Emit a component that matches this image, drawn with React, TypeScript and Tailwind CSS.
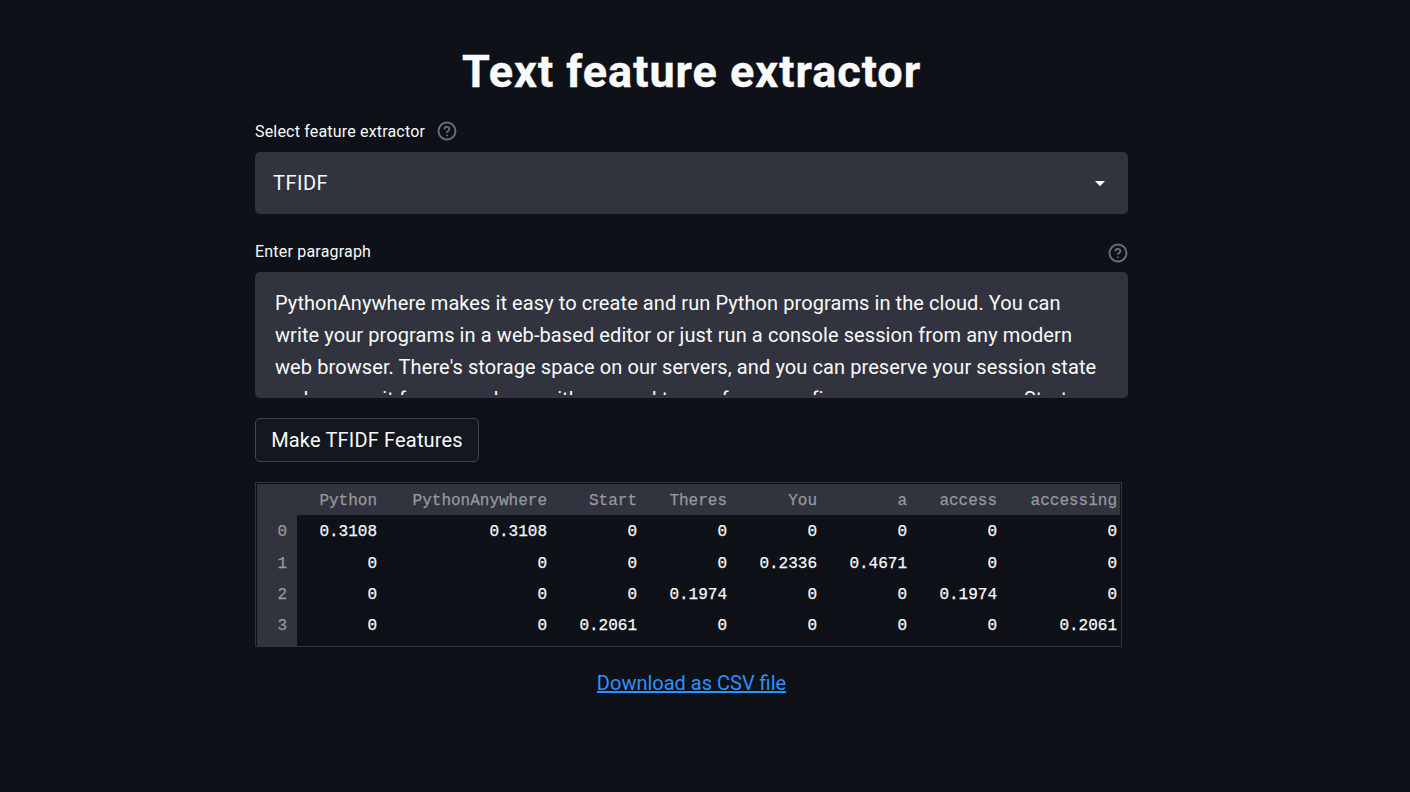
function HelpIcon() {
  return (
    <svg className="block h-5 w-5 shrink-0" viewBox="0 0 20 20" fill="none" stroke="#6b6d75" strokeWidth="1.9" strokeLinecap="round" strokeLinejoin="round">
      <circle cx="10" cy="10" r="8.5" />
      <path d="M7.5 7.5a2.5 2.5 0 0 1 4.86.83c0 1.67-2.4 2.3-2.4 2.7" />
      <path d="M10 14.2h.01" />
    </svg>
  );
}

const columns = [
  { name: "Python", width: "w-[90px]", cells: ["0.3108", "0", "0", "0"] },
  { name: "PythonAnywhere", width: "w-[170px]", cells: ["0.3108", "0", "0", "0"] },
  { name: "Start", width: "w-[90px]", cells: ["0", "0", "0", "0.2061"] },
  { name: "Theres", width: "w-[90px]", cells: ["0", "0", "0.1974", "0"] },
  { name: "You", width: "w-[90px]", cells: ["0", "0.2336", "0", "0"] },
  { name: "a", width: "w-[90px]", cells: ["0", "0.4671", "0", "0"] },
  { name: "access", width: "w-[90px]", cells: ["0", "0", "0.1974", "0"] },
  { name: "accessing", width: "w-[120px]", cells: ["0", "0", "0", "0.2061"] },
];

function FeatureTable() {
  return (
    <div className="mt-5 flex h-[165px] w-[867px] overflow-hidden border border-[#31333f] pt-px pr-px pl-px font-['Liberation_Mono',monospace] text-base leading-[35px] [-webkit-text-stroke:0.25px]">
      <div className="w-10 shrink-0 bg-[#31333f] pt-[31.25px] pr-[10px] text-right text-[#97989b]">
        {[0, 1, 2, 3].map((n) => (
          <div key={n} className="h-[31.25px]">{n}</div>
        ))}
      </div>
      <div className="flex min-w-0 flex-1 overflow-hidden">
        {columns.map((c) => (
          <div key={c.name} className={`${c.width} shrink-0 text-right`}>
            <div className="h-[31.25px] bg-[#31333f] pr-[10px] text-[#97989b]">{c.name}</div>
            {c.cells.map((v, i) => (
              <div key={i} className="h-[31.25px] pr-[10px]">{v}</div>
            ))}
          </div>
        ))}
      </div>
    </div>
  );
}

export default function App() {
  return (
    <div className="h-[792px] w-full overflow-hidden bg-[#0e1117] font-['Roboto',sans-serif] text-xl text-[#fafafa]">
      <main className="ml-[255px] flex w-[873px] flex-col pt-[45px]">
        <h1 className="h-[54px] text-center text-[45px] leading-[54px] font-bold tracking-[0.98px] whitespace-nowrap [-webkit-text-stroke:0.4px]">Text feature extractor</h1>
        <div className="mt-5 flex h-6 items-center gap-3 text-base">
          <span className="pt-px leading-6 tracking-[0.18px]">Select feature extractor</span>
          <HelpIcon />
        </div>
        <div className="mt-[9px] flex h-[62px] items-center justify-between rounded-[5px] bg-[#31333f] pr-[23px] pl-[18px]">
          <span className="tracking-[0.5px]">TFIDF</span>
          <svg className="h-[5px] w-[10px]" viewBox="0 0 10 5">
            <path d="M0 0h10L5.8 4.6Q5 5.2 4.2 4.6Z" fill="#fafafa" />
          </svg>
        </div>
        <div className="mt-[26px] flex h-6 items-center justify-between text-base">
          <span className="leading-6 tracking-[0.2px]">Enter paragraph</span>
          <div className="pt-0.5">
            <HelpIcon />
          </div>
        </div>
        <div className="mt-2 h-[126px] rounded-[5px] bg-[#31333f] pt-[15px] pl-5">
          <div className="h-[108px] overflow-hidden leading-8 whitespace-nowrap">
            <div className="tracking-[0.078px]">PythonAnywhere makes it easy to create and run Python programs in the cloud. You can</div>
            <div className="tracking-[0.09px]">write your programs in a web-based editor or just run a console session from any modern</div>
            <div className="tracking-[0.09px]">web browser. There's storage space on our servers, and you can preserve your session state</div>
            <div className="tracking-[0.1px]">and access it from anywhere, with no need to pay for, or configure, your own server. Start</div>
          </div>
        </div>
        <button className="mt-5 h-11 w-[224px] rounded-[5px] border border-[#41444c] bg-[#13171f] text-center tracking-[0.17px]">Make TFIDF Features</button>
        <FeatureTable />
        <div className="mt-5 text-center leading-8">
          <a href="#" className="text-[#2c91ff] underline decoration-2 underline-offset-1">Download as CSV file</a>
        </div>
      </main>
    </div>
  );
}
